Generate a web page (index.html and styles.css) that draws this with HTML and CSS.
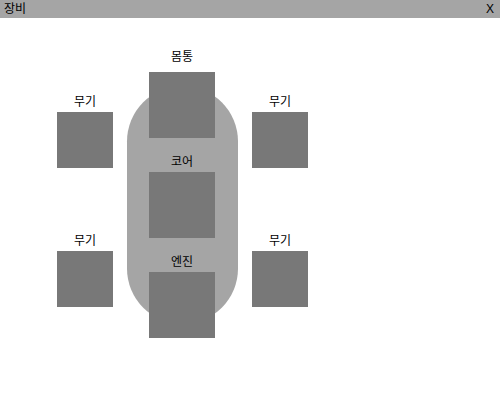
FILE: index.html
```html
<!DOCTYPE html>
<html lang="ko">
<head>
    <meta charset="UTF-8">
    <meta name="viewport" content="width=device-width, initial-scale=1.0">
    <title>장비</title>
    <link rel="stylesheet" href="styles.css">
</head>
<body>
    <!-- Window title bar -->
    <div class="title-bar">
        <span class="title">장비</span>
        <span class="close" id="closeButton">X</span>
    </div>

    <!-- Equipment slots -->
    <div class="equipment">
        <div class="side-column">
            <div class="slot">
                <div class="slot-label">무기</div>
                <div class="slot-box"></div>
            </div>
            <div class="slot">
                <div class="slot-label">무기</div>
                <div class="slot-box"></div>
            </div>
        </div>

        <div class="center-column">
            <!-- Rounded body behind the core parts -->
            <div class="hull"></div>
            <div class="slot">
                <div class="slot-label spaced">몸통</div>
                <div class="slot-box large"></div>
            </div>
            <div class="slot">
                <div class="slot-label">코어</div>
                <div class="slot-box large"></div>
            </div>
            <div class="slot">
                <div class="slot-label">엔진</div>
                <div class="slot-box large"></div>
            </div>
        </div>

        <div class="side-column">
            <div class="slot">
                <div class="slot-label">무기</div>
                <div class="slot-box"></div>
            </div>
            <div class="slot">
                <div class="slot-label">무기</div>
                <div class="slot-box"></div>
            </div>
        </div>
    </div>
</body>
</html>
```
FILE: styles.css
```css
body {
    font-family: "Liberation Sans", "Noto Sans CJK KR", sans-serif;
    font-size: 12px;
    background-color: #fff;
    color: #000;
    margin: 0;
    padding: 0;
}

.title-bar {
    height: 18px;
    background-color: #a5a5a5;
    display: flex;
    justify-content: space-between;
    align-items: center;
    padding: 0 6px 0 4px;
    line-height: 18px;
}

.close {
    cursor: pointer;
}

.equipment {
    display: flex;
    align-items: flex-start;
    gap: 14px;
    padding-left: 57px;
}

.side-column {
    width: 56px;
    display: flex;
    flex-direction: column;
    gap: 64px;
    padding-top: 75px;
}

.center-column {
    position: relative;
    width: 110px;
    margin-right: 1px;
    display: flex;
    flex-direction: column;
    gap: 15px;
    padding-top: 30px;
}

.hull {
    position: absolute;
    top: 68px;
    left: 0;
    width: 111px;
    height: 238px;
    border-radius: 56px;
    background-color: #a5a5a5;
}

.slot {
    position: relative;
    display: flex;
    flex-direction: column;
    align-items: center;
}

.slot-label {
    line-height: 14px;
    padding-top: 2px;
    margin-bottom: 3px;
}

.slot-label.spaced {
    margin-bottom: 8px;
}

.slot-box {
    width: 56px;
    height: 56px;
    background-color: #787878;
}

.slot-box.large {
    width: 66px;
    height: 66px;
}
```
